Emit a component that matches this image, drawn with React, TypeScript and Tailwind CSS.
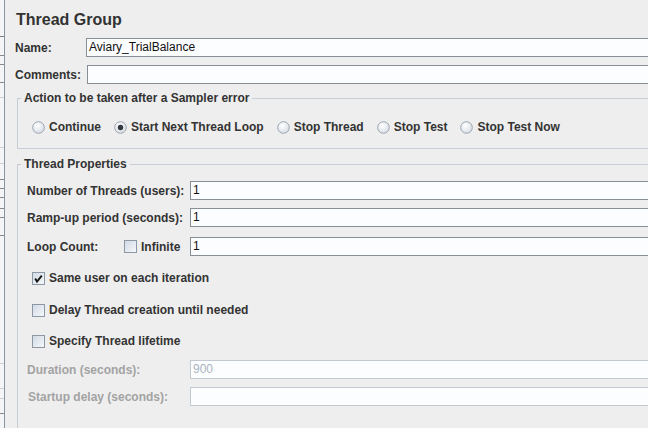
import { useId } from "react";

const font = "font-['Liberation_Sans',Arial,sans-serif]";

function Radio({ checked = false }: { checked?: boolean }) {
  const id = useId();
  return (
    <svg width="13" height="13" viewBox="0 0 13 13" className="shrink-0">
      <defs>
        <radialGradient id={id} cx="40%" cy="35%" r="75%">
          <stop offset="0" stopColor="#ffffff" />
          <stop offset="1" stopColor="#d3d9e1" />
        </radialGradient>
      </defs>
      <circle cx="6.5" cy="6.5" r="5.8" fill={`url(#${id})`} stroke="#9ba5b0" strokeWidth="1" />
      {checked && <circle cx="6.5" cy="6.5" r="2.7" fill="#34383d" />}
    </svg>
  );
}

function Checkbox({ checked = false }: { checked?: boolean }) {
  const id = useId();
  return (
    <svg width="13" height="13" viewBox="0 0 13 13" className="shrink-0">
      <defs>
        <linearGradient id={id} x1="0" y1="0" x2="1" y2="1">
          <stop offset="0" stopColor="#cfd9e4" />
          <stop offset="1" stopColor="#f7f9fb" />
        </linearGradient>
      </defs>
      <rect x="0.5" y="0.5" width="12" height="12" fill={`url(#${id})`} stroke="#8d98a4" />
      {checked && (
        <path d="M3.2 6.6 L5 9.6 L9.8 3.6" fill="none" stroke="#161616" strokeWidth="1.9" strokeLinejoin="miter" />
      )}
    </svg>
  );
}

function Field({ value = "", disabled = false }: { value?: string; disabled?: boolean }) {
  return (
    <div
      className={`flex-1 h-[19px] bg-[#fcfdfe] border pl-[2px] leading-[17px] font-normal whitespace-nowrap ${
        disabled ? "border-[#c3c9d0] text-[#aab4be]" : "border-[#878e96] text-[#111]"
      }`}
    >
      {value}
    </div>
  );
}

function RadioItem({ label, checked }: { label: string; checked?: boolean }) {
  return (
    <div className="flex items-center gap-[4px]">
      <Radio checked={checked} />
      <span>{label}</span>
    </div>
  );
}

function CheckRow({ label, checked, className }: { label: string; checked?: boolean; className: string }) {
  return (
    <div className={`h-[20px] ml-[5px] flex items-center gap-[4px] ${className}`}>
      <Checkbox checked={checked} />
      <span>{label}</span>
    </div>
  );
}

export default function App() {
  return (
    <div className={`w-[648px] h-[428px] overflow-hidden flex bg-[#eeeeee] ${font}`}>
      {/* Tree panel edge */}
      <div className="w-[5px] shrink-0 bg-[#f3f5f7] border-r border-[#8a949e] flex flex-col">
        <div className="h-[37px] border-b border-[#7c7c7c]" />
        <div className="h-[19px] border-b border-[#8a8a8a]" />
        <div className="h-[9px] border-b border-[#8a8a8a]" />
        <div className="h-[18px] border-b border-[#8a8a8a]" />
        <div className="h-[15px] border-b border-[#cfcfcf]" />
        <div className="h-[50px] border-b border-[#cfcfcf]" />
        <div className="h-[16px] border-b border-[#cfcfcf]" />
        <div className="h-[16px] border-b border-[#8a8a8a]" />
        <div className="h-[9px] border-b border-[#8a8a8a]" />
        <div className="h-[9px] border-b border-[#8a8a8a]" />
        <div className="h-[11px] border-b border-[#8a8a8a]" />
        <div className="h-[9px] border-b border-[#8a8a8a]" />
        <div className="h-[18px] border-b border-[#8a8a8a]" />
        <div className="h-[128px] border-b border-[#cfcfcf]" />
        <div className="h-[25px] border-b border-[#cfcfcf]" />
        <div className="h-[10px] border-b border-[#cfcfcf]" />
        <div className="h-[15px] border-b border-[#8a8a8a]" />
      </div>

      {/* Thread Group editor */}
      <div className="w-[720px] shrink-0 flex flex-col pl-[10px] text-[12px] font-bold text-[#333]">
        <div className="mt-[10px] ml-[1px] h-[20px] leading-[20px] text-[16px]">Thread Group</div>

        <div className="mt-[8px] h-[19px] flex items-center">
          <span className="w-[71px] shrink-0">Name:</span>
          <Field value="Aviary_TrialBalance" />
        </div>
        <div className="mt-[8px] h-[19px] flex items-center">
          <span className="w-[72px] shrink-0">Comments:</span>
          <Field />
        </div>

        <fieldset className="mt-[7px] ml-[2px] border border-[#c7cdd4] pb-[11px]">
          <legend className="ml-[3px] px-[3px] h-[15px] leading-[15px]">Action to be taken after a Sampler error</legend>
          <div className="mt-[11px] ml-[14px] h-[20px] flex items-center gap-[13px]">
            <RadioItem label="Continue" />
            <RadioItem label="Start Next Thread Loop" checked />
            <RadioItem label="Stop Thread" />
            <RadioItem label="Stop Test" />
            <RadioItem label="Stop Test Now" />
          </div>
        </fieldset>

        <fieldset className="mt-[8px] ml-[2px] border border-[#c7cdd4] pb-[60px]">
          <legend className="ml-[3px] px-[3px] h-[15px] leading-[15px]">Thread Properties</legend>
          <div className="pl-[9px] flex flex-col">
            <div className="mt-[9px] h-[19px] flex items-center">
              <span className="w-[163px] shrink-0">Number of Threads (users):</span>
              <Field value="1" />
            </div>
            <div className="mt-[8px] h-[19px] flex items-center">
              <span className="w-[163px] shrink-0">Ramp-up period (seconds):</span>
              <Field value="1" />
            </div>
            <div className="mt-[10px] h-[19px] flex items-center">
              <div className="w-[163px] shrink-0 flex items-center">
                <span className="w-[97px] shrink-0">Loop Count:</span>
                <Checkbox />
                <span className="ml-[4px]">Infinite</span>
              </div>
              <Field value="1" />
            </div>

            <CheckRow className="mt-[12px]" label="Same user on each iteration" checked />
            <CheckRow className="mt-[12px]" label="Delay Thread creation until needed" />
            <CheckRow className="mt-[11px]" label="Specify Thread lifetime" />

            <div className="mt-[9px] h-[19px] flex items-center text-[#a3a3a3]">
              <span className="w-[163px] shrink-0">Duration (seconds):</span>
              <Field value="900" disabled />
            </div>
            <div className="mt-[8px] h-[19px] flex items-center text-[#a3a3a3]">
              <span className="w-[163px] shrink-0 pl-[1px]">Startup delay (seconds):</span>
              <Field disabled />
            </div>
          </div>
        </fieldset>
      </div>
    </div>
  );
}
